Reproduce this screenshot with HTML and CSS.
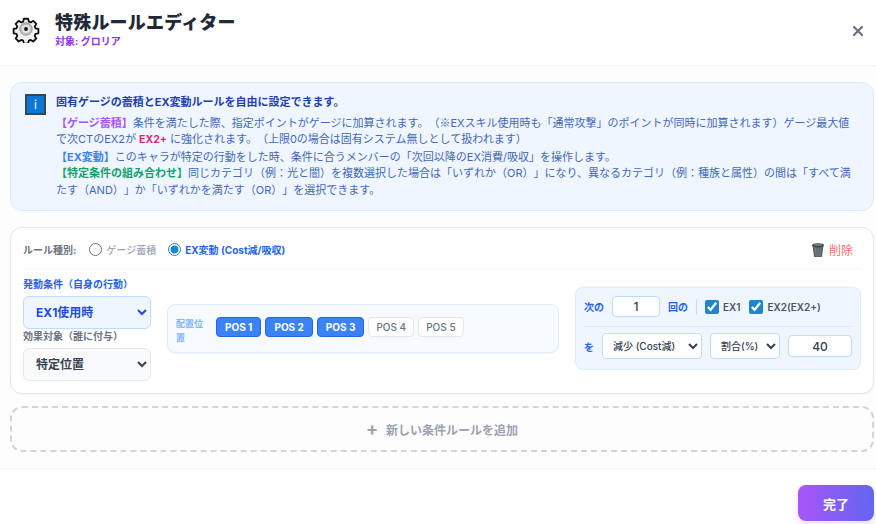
FILE: index.html
```html
<!DOCTYPE html>
<html lang="ja">
<head>
<meta charset="utf-8">
<title>特殊ルールエディター</title>
<link rel="stylesheet" href="styles.css">
</head>
<body>
<div class="modal">
  <header class="head">
    <svg class="gear" viewBox="0 0 28 28" width="28" height="28">
      <path d="M11.6 2.6h4.8l.7 3.2 2.2.9 2.8-1.8 3.4 3.4-1.8 2.8.9 2.2 3.2.7v4.8l-3.2.7-.9 2.2 1.8 2.8-3.4 3.4-2.8-1.8-2.2.9-.7 3.2h-4.8l-.7-3.2-2.2-.9-2.8 1.8-3.4-3.4 1.8-2.8-.9-2.2-3.2-.7v-4.8l3.2-.7.9-2.2-1.8-2.8 3.4-3.4 2.8 1.8 2.2-.9z" transform="translate(1.4 1.4) scale(.9)" fill="#f2f2f2" stroke="#111" stroke-width="2" stroke-linejoin="round"/>
      <circle cx="14" cy="14" r="6.2" fill="#bdbdbd" stroke="#8a8a8a" stroke-width=".8"/>
      <circle cx="14" cy="14" r="4" fill="#e4e4e4"/>
      <circle cx="14" cy="14" r="1.9" fill="#111"/>
    </svg>
    <div class="head-text">
      <h1 class="title">特殊ルールエディター</h1>
      <div class="subtitle">対象: グロリア</div>
    </div>
    <svg class="close" viewBox="0 0 12 12" width="12" height="12"><path d="M2 2l8 8M10 2l-8 8" stroke="#6b7280" stroke-width="2.2" stroke-linecap="round"/></svg>
  </header>

  <main class="content">
    <section class="info">
      <span class="info-icon">i</span>
      <div class="info-text">
        <p class="info-lead">固有ゲージの蓄積とEX変動ルールを自由に設定できます。</p>
        <p class="info-body"><b class="c-purple">【ゲージ蓄積】</b>条件を満たした際、指定ポイントがゲージに加算されます。（<span class="cjk">※</span>EXスキル使用時も「通常攻撃」のポイントが同時に加算されます）ゲージ最大値で次CTのEX2が <b class="c-pink">EX2+</b> に強化されます。（上限0の場合は固有システム無しとして扱われます）<br><b class="c-blue">【EX変動】</b>このキャラが特定の行動をした時、条件に合うメンバーの「次回以降のEX消費/吸収」を操作します。<br><b class="c-green">【特定条件の組み合わせ】</b>同じカテゴリ（例：光と闇）を複数選択した場合は「いずれか（OR）」になり、異なるカテゴリ（例：種族と属性）の間は「すべて満たす（AND）」か「いずれかを満たす（OR）」を選択できます。</p>
      </div>
    </section>

    <section class="rule">
      <div class="rule-top">
        <span class="rule-label">ルール種別:</span>
        <label class="radio muted"><input type="radio" name="kind">ゲージ蓄積</label>
        <label class="radio on"><input type="radio" name="kind" checked>EX変動 (Cost減/吸収)</label>
        <span class="del">
          <svg viewBox="0 0 14 16" width="14" height="16"><path d="M1.5 3.5h11L11 15H3z" fill="#5c6468"/><ellipse cx="7" cy="3.2" rx="6" ry="2" fill="#3c4144"/><ellipse cx="7" cy="3" rx="4.4" ry="1.1" fill="#777f83"/><path d="M4.5 6l.6 8M7 6v8M9.5 6l-.6 8" stroke="#868d91" stroke-width=".7"/></svg>
          削除
        </span>
      </div>
      <div class="rule-body">
        <div class="col-left">
          <div class="field-label blue">発動条件（自身の行動）</div>
          <select class="sel sel-blue"><option>EX1使用時</option></select>
          <div class="field-label">効果対象（誰に付与）</div>
          <select class="sel"><option>特定位置</option></select>
        </div>
        <div class="pos-panel">
          <span class="pos-label">配置位置</span>
          <div class="pos-list">
            <span class="pos active">POS 1</span>
            <span class="pos active">POS 2</span>
            <span class="pos active">POS 3</span>
            <span class="pos">POS 4</span>
            <span class="pos">POS 5</span>
          </div>
        </div>
        <div class="effect">
          <div class="eff-row eff-row-top">
            <span class="eff-word">次の</span>
            <input class="num num-count" type="text" value="1">
            <span class="eff-word">回の</span>
            <span class="vr"></span>
            <label class="chk"><input type="checkbox" checked>EX1</label>
            <label class="chk"><input type="checkbox" checked>EX2(EX2+)</label>
          </div>
          <div class="eff-row eff-row-bottom">
            <span class="eff-word">を</span>
            <select class="mini mini-a"><option>減少 (Cost減)</option></select>
            <select class="mini mini-b"><option>割合(%)</option></select>
            <input class="num num-val" type="text" value="40">
          </div>
        </div>
      </div>
    </section>

    <button class="add" type="button"><span class="plus">+</span>新しい条件ルールを追加</button>
  </main>

  <footer class="foot">
    <button class="done" type="button">完了</button>
  </footer>
</div>
</body>
</html>
```

FILE: styles.css
```css
* { box-sizing: border-box; }
html, body { margin: 0; height: 100%; }
body {
  background: #fff;
  font-family: Inter, "Noto Sans CJK JP", sans-serif;
  color: #1f2937;
  overflow: hidden;
  text-spacing-trim: space-all;
}
p, h1 { margin: 0; }
.modal { width: 876px; height: 524px; display: flex; flex-direction: column; }
.cjk { font-family: "Noto Sans CJK JP", sans-serif; }

.head {
  height: 66px;
  flex: none;
  display: flex;
  align-items: center;
  padding: 0 12px 7px 12px;
  border-bottom: 1px solid #f3f4f6;
}
.gear { flex: none; margin-right: 15px; }
.head-text { flex: 1; }
.title { font-size: 18px; line-height: 24px; font-weight: 900; color: #1f2937; letter-spacing: .2px; }
.subtitle { font-size: 10px; line-height: 13px; font-weight: 700; color: #9333ea; }
.close { flex: none; margin-top: 3px; }

.content {
  flex: 1;
  background: #fdfdfe;
  padding: 16px 2px 16px 10px;
  display: flex;
  flex-direction: column;
  gap: 16px;
  border-bottom: 1px solid #f3f4f6;
}

.info {
  height: 129px;
  flex: none;
  background: #eff6ff;
  border: 1px solid #dbeafe;
  border-radius: 12px;
  display: flex;
  padding: 11px 22px 11px 14px;
  gap: 10px;
}
.info-icon {
  flex: none;
  width: 21px;
  height: 21px;
  background: #0b78d8;
  border: 2px solid #37474f;
  color: #fff;
  font-size: 12px;
  line-height: 17px;
  text-align: center;
}
.info-text { flex: 1; font-size: 11px; line-height: 16.5px; }
.info-lead { font-weight: 700; color: #1e40af; margin-bottom: 3px; }
.info-body { color: #4468b8; }
.c-purple { color: #a855f7; }
.c-pink { color: #db2777; font-size: 10.5px; }
.c-blue { color: #3b82f6; }
.c-green { color: #10a36f; }

.rule {
  height: 167px;
  flex: none;
  background: #fff;
  border: 1px solid #e5e7eb;
  border-radius: 12px;
  padding: 12px;
  box-shadow: 0 1px 2px rgba(0,0,0,.04);
}
.rule-top {
  height: 29px;
  display: flex;
  align-items: center;
  gap: 12px;
  font-size: 10px;
  padding-bottom: 9px;
  border-bottom: 1px solid #f3f4f6;
}
.rule-label { font-weight: 700; color: #6b7280; margin-right: 1px; }
.radio { display: flex; align-items: center; gap: 4px; font-weight: 500; }
.radio input { width: 13px; height: 13px; margin: 0; accent-color: #1d87c9; }
.muted { color: #9ca3af; }
.on { color: #2563eb; font-weight: 700; }
.del { margin-left: auto; margin-right: 8px; display: flex; align-items: center; gap: 4px; color: #f87171; font-size: 12px; }

.rule-body {
  display: grid;
  grid-template-columns: 128px 392px 286px;
  column-gap: 16px;
  align-items: center;
  margin-right: -3px;
  padding-top: 7px;
}
.col-left { display: flex; flex-direction: column; }
.field-label { font-size: 10px; line-height: 15px; height: 15px; font-weight: 700; color: #6b7280; margin-bottom: 4px; }
.field-label.blue { color: #2563eb; height: 17px; line-height: 17px; margin-bottom: 3px; }
.sel {
  width: 128px;
  height: 33px;
  border-radius: 6px;
  border: 1px solid #e5e7eb;
  background-color: #f9fafb;
  font: 700 12px Inter, "Noto Sans CJK JP", sans-serif;
  color: #374151;
  padding-left: 8px;
}
.sel-blue { background-color: #eff6ff; border-color: #bfdbfe; color: #1d4ed8; }

.pos-panel {
  height: 49px;
  background: #f7faff;
  border: 1px solid #dbeafe;
  border-radius: 8px;
  display: flex;
  align-items: center;
  padding: 0 8px;
  gap: 8px;
}
.pos-label { width: 32px; flex: none; padding-top: 4px; font-size: 9px; line-height: 14px; font-weight: 700; color: #7db5fb; }
.pos-list { display: flex; gap: 4px; padding-bottom: 3px; }
.pos {
  height: 20px;
  padding: 0 7px;
  border: 1px solid #e5e7eb;
  border-radius: 4px;
  background: #fff;
  color: #6b7280;
  font-size: 10px;
  font-weight: 500;
  line-height: 18px;
  white-space: nowrap;
}
.pos.active { padding: 0 8px; background: #3b82f6; border-color: #2563eb; color: #fff; font-weight: 700; }

.effect {
  height: 83px;
  background: #eff6ff;
  border: 1px solid #dbeafe;
  border-radius: 8px;
  padding: 8px;
  display: flex;
  flex-direction: column;
}
.eff-row { display: flex; align-items: center; }
.eff-row-top { height: 31px; padding-bottom: 8px; border-bottom: 1px solid #dbeafe; }
.eff-row-bottom { padding-top: 5px; height: 35px; gap: 8px; }
.eff-word { font-size: 10px; font-weight: 700; color: #2563eb; }
.num {
  height: 21px;
  border: 1px solid #bfdbfe;
  border-radius: 4px;
  background: #fff;
  text-align: center;
  font: 500 12px Inter, "Noto Sans CJK JP", sans-serif;
  color: #374151;
  padding: 0;
  outline: none;
}
.num-count { width: 48px; margin: 0 8px; }
.num-val { width: 64px; height: 22px; }
.vr { width: 1px; height: 15px; background: #bfdbfe; margin: 0 8px; }
.chk { display: flex; align-items: center; gap: 4px; font-size: 10px; font-weight: 600; color: #4b5563; margin-right: 9px; }
.chk input { width: 14px; height: 14px; margin: 0; accent-color: #1d87c9; }
.mini {
  height: 26px;
  border: 1px solid #bfdbfe;
  border-radius: 4px;
  background-color: #fff;
  font: 500 10px Inter, "Noto Sans CJK JP", sans-serif;
  color: #374151;
  padding-left: 6px;
}
.mini-a { width: 100px; }
.mini-b { width: 70px; }

.add {
  height: 46px;
  flex: none;
  margin-top: -4px;
  border: 2px dashed #d1d5db;
  border-radius: 12px;
  background: transparent;
  color: #9ca3af;
  font: 700 12px Inter, "Noto Sans CJK JP", sans-serif;
  display: flex;
  align-items: center;
  justify-content: center;
  gap: 8px;
}
.plus { font-size: 18px; line-height: 18px; font-weight: 700; }

.foot {
  height: 55px;
  flex: none;
  background: #fff;
  display: flex;
  justify-content: flex-end;
  align-items: flex-end;
  padding: 0 2px 3px 0;
}
.done {
  width: 76px;
  height: 36px;
  border: 0;
  border-radius: 8px;
  background: linear-gradient(90deg, #a855f7, #6366f1);
  color: #fff;
  font: 700 13px Inter, "Noto Sans CJK JP", sans-serif;
  box-shadow: 0 4px 8px rgba(168,85,247,.2);
}
```
